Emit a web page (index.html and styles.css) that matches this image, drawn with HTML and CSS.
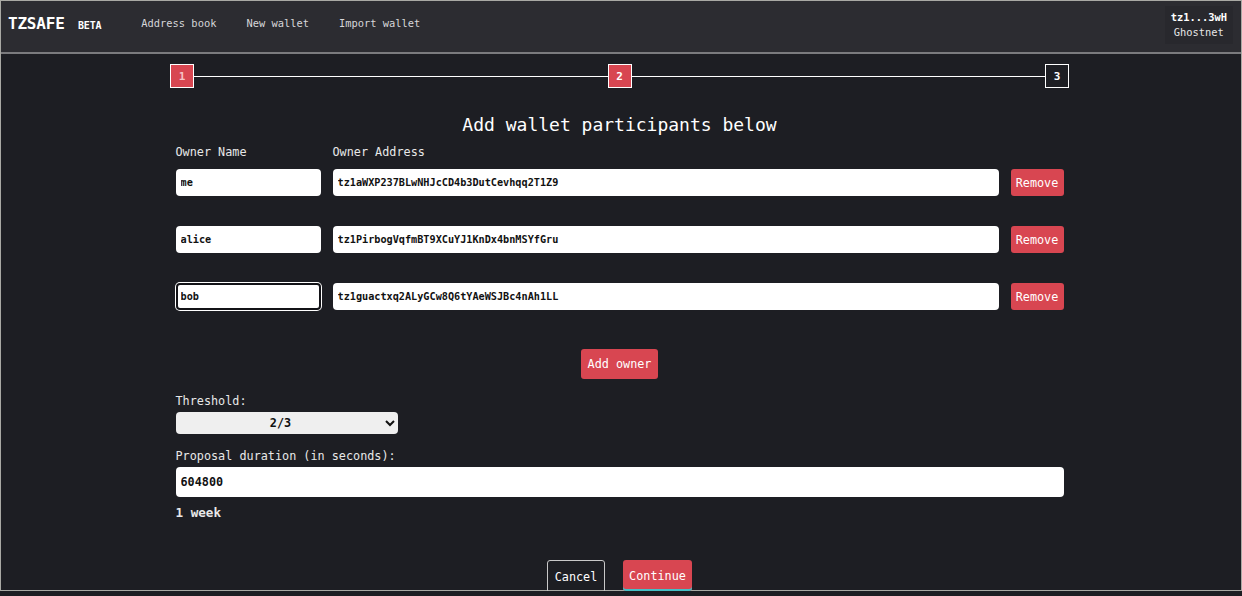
FILE: index.html
```
<!DOCTYPE html>
<html lang="en">
<head>
<meta charset="utf-8">
<title>TzSafe - New wallet</title>
<link rel="stylesheet" href="styles.css">
</head>
<body>
<div class="app">
  <header class="topbar">
    <div class="brand">TZSAFE <span class="beta">BETA</span></div>
    <nav class="nav">
      <a href="#">Address book</a>
      <a href="#">New wallet</a>
      <a href="#">Import wallet</a>
    </nav>
    <div class="account">
      <div class="addr">tz1...3wH</div>
      <div class="net">Ghostnet</div>
    </div>
  </header>
  <main class="main">
    <div class="stepper">
      <div class="step done"><span>1</span></div>
      <div class="line"></div>
      <div class="step active">2</div>
      <div class="line"></div>
      <div class="step">3</div>
    </div>
    <h1 class="title">Add wallet participants below</h1>
    <div class="form">
      <div class="owners-head">
        <div class="lbl">Owner Name</div>
        <div class="lbl">Owner Address</div>
      </div>
      <div class="owners">
        <input class="field" value="me">
        <input class="field" value="tz1aWXP237BLwNHJcCD4b3DutCevhqq2T1Z9">
        <button class="btn red rm">Remove</button>
        <input class="field" value="alice">
        <input class="field" value="tz1PirbogVqfmBT9XCuYJ1KnDx4bnMSYfGru">
        <button class="btn red rm">Remove</button>
        <input class="field focus" value="bob">
        <input class="field" value="tz1guactxq2ALyGCw8Q6tYAeWSJBc4nAh1LL">
        <button class="btn red rm">Remove</button>
      </div>
      <div class="center"><button class="btn red add">Add owner</button></div>
      <label class="lbl2">Threshold:</label>
      <select class="sel"><option>1/3</option><option selected>2/3</option><option>3/3</option></select>
      <label class="lbl2">Proposal duration (in seconds):</label>
      <input class="field big" value="604800">
      <div class="hint">1 week</div>
      <div class="actions">
        <button class="btn ghost">Cancel</button>
        <button class="btn red cont">Continue</button>
      </div>
    </div>
  </main>
</div>
</body>
</html>
```
FILE: styles.css
```
* { box-sizing: border-box; }
html, body { margin: 0; padding: 0; background: #1d1e23; }
body {
  font-family: "DejaVu Sans Mono", "Liberation Mono", monospace;
  color: #fff;
  overflow: hidden;
}
.app {
  height: 591px;
  border: 1px solid #a9a9a4;
}
.topbar {
  height: 53px;
  background: #2c2c31;
  border-bottom: 2px solid #7b7b7e;
  display: flex;
  align-items: center;
  padding: 0 8px 7px 7px;
}
.brand {
  font-size: 16px;
  font-weight: bold;
  letter-spacing: -0.2px;
  white-space: nowrap;
}
.beta { font-size: 10px; margin-left: 4px; }
.nav { display: flex; gap: 30px; margin-left: 40px; }
.nav a {
  color: #d6d6d9;
  text-decoration: none;
  font-size: 10.4px;
}
.account {
  margin-left: auto;
  margin-top: 3px;
  background: #28282d;
  padding: 4px 6px;
  text-align: center;
  font-size: 10.4px;
  line-height: 15px;
}
.addr { font-weight: bold; }
.net { color: #e6e6e6; }
.main { padding: 10px 3px 0 0; }
.stepper {
  width: 899px;
  margin: 0 auto;
  display: flex;
  align-items: center;
}
.step {
  width: 24px;
  height: 24px;
  border: 1px solid #fff;
  display: flex;
  align-items: center;
  justify-content: center;
  font-size: 11px;
  font-weight: bold;
  color: #fff;
}
.step.done, .step.active { background: #d84651; }
.step.done span { color: #f6c3c7; }
.line { flex: 1; height: 1px; background: #fff; }
.title {
  margin: 26px 0 0;
  text-align: center;
  font-size: 18px;
  font-weight: normal;
  line-height: 22px;
}
.form { width: 888px; margin: 0 auto; }
.owners-head, .owners {
  display: grid;
  grid-template-columns: 145px 1fr 53px;
  column-gap: 12px;
}
.owners-head { margin-top: 9px; }
.owners { row-gap: 30px; margin-top: 10px; }
.lbl, .lbl2 {
  font-size: 11.8px;
  line-height: 14px;
  color: #e8e8e8;
  display: block;
}
.field {
  height: 27px;
  border: none;
  border-radius: 4px;
  background: #fff;
  color: #111;
  font-family: inherit;
  font-size: 10.2px;
  font-weight: bold;
  padding: 0 5px;
  width: 100%;
}
.field.focus {
  box-shadow: inset 0 0 0 2px #131317, 0 0 0 1px #fff;
}
.btn {
  font-family: inherit;
  font-size: 11.8px;
  border-radius: 3px;
  color: #fff;
  cursor: pointer;
}
.red { background: #d84651; border: none; }
.rm { height: 27px; padding: 0; }
.center { display: flex; justify-content: center; margin-top: 39px; }
.add { height: 30px; width: 77px; padding: 0; }
.lbl2 { margin-top: 15px; }
.sel {
  margin-top: 4px;
  width: 222px;
  height: 22px;
  background: #efefef;
  border: none;
  border-radius: 4px;
  font-family: inherit;
  font-size: 11.8px;
  font-weight: bold;
  color: #111;
  text-align: center;
  text-align-last: center;
  display: block;
}
.big { margin-top: 4px; height: 30px; font-size: 11.8px; display: block; }
.hint {
  margin-top: 8px;
  font-size: 12.6px;
  line-height: 16px;
  font-weight: bold;
  color: #e8e8e8;
}
.actions {
  display: flex;
  justify-content: center;
  gap: 18px;
  margin-top: 39px;
}
.ghost {
  background: transparent;
  border: 1px solid #c8c8c8;
  height: 33px;
  width: 58px;
  padding: 0;
}
.cont {
  height: 31px;
  width: 69px;
  padding: 0;
  box-shadow: inset 0 -2px 0 #43bfc5;
}
```
